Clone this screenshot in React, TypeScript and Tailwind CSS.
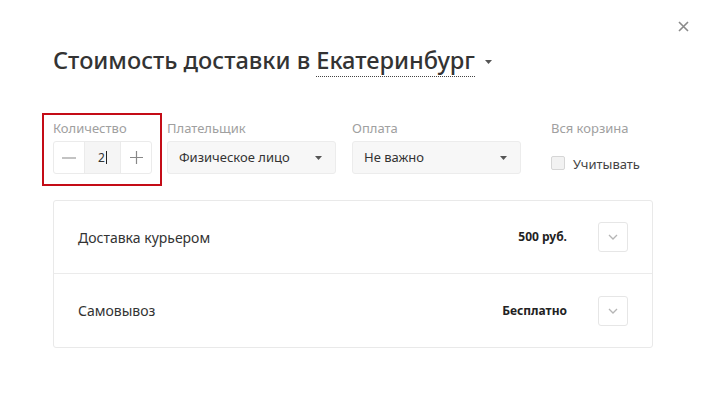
import React from "react";

const font = { fontFamily: '"Noto Sans", "Open Sans", sans-serif' };

function Caret() {
  return (
    <svg width="7" height="4" viewBox="0 0 7 4" className="block">
      <path d="M0 0h7L3.5 4z" fill="#555" />
    </svg>
  );
}

function Chevron() {
  return (
    <svg width="10" height="6" viewBox="0 0 10 6" fill="none">
      <path d="M1 1l4 4 4-4" stroke="#b5b5b5" strokeWidth="1.3" />
    </svg>
  );
}

function Select({ value }: { value: string }) {
  return (
    <div className="flex h-[33px] w-[169px] items-center justify-between rounded-[3px] border border-[#ececec] bg-[#f7f7f7] pl-[11px] pr-[13px] text-[13px] text-[#333]">
      <span>{value}</span>
      <Caret />
    </div>
  );
}

function Row({ title, price, last }: { title: string; price: string; last?: boolean }) {
  return (
    <div
      className={`flex h-[73px] items-center pl-[24px] pr-[24px] ${last ? "" : "border-b border-[#ebebeb]"}`}
    >
      <span className="flex-1 text-[14px] text-[#333]">{title}</span>
      <span className="mr-[31px] text-[12px] font-bold text-[#222]">{price}</span>
      <div className="flex h-[30px] w-[30px] items-center justify-center rounded-[3px] border border-[#e6e6e6] bg-white">
        <Chevron />
      </div>
    </div>
  );
}

export default function App() {
  return (
    <div className="relative h-[400px] w-[708px] overflow-hidden bg-white" style={font}>
      <button className="absolute right-[19px] top-[20px] flex h-[12px] w-[12px] items-center justify-center">
        <svg width="11" height="11" viewBox="0 0 11 11">
          <path d="M1 1l9 9M10 1l-9 9" stroke="#8a8a8a" strokeWidth="1.6" />
        </svg>
      </button>

      <div className="pl-[53px] pr-[56px] pt-[42px]">
        <div className="flex items-center">
          <h1 className="text-[23.6px] font-medium leading-[36px] text-[#333]">
            Стоимость доставки в{" "}
            <span className="border-b border-dotted border-[#444]">Екатеринбург</span>
          </h1>
          <span className="ml-[10px] mt-[4px]">
            <Caret />
          </span>
        </div>

        <div className="mt-[41px] flex">
          <div className="-ml-[11px] -mt-[6px] mr-[5px] flex h-[73px] w-[120px] flex-col border-2 border-[#c40c17] pl-[9px] pt-[4px]">
            <span className="text-[13px] leading-[18px] text-[#a0a0a0]">Количество</span>
            <div className="mt-[4px] flex h-[33px] w-[99px] overflow-hidden rounded-[3px] border border-[#ebebeb] text-[#777]">
              <div className="flex w-[31px] items-center justify-center border-r border-[#ebebeb]">
                <svg width="14" height="2" viewBox="0 0 14 2">
                  <path d="M0 1h14" stroke="#888" strokeWidth="1.2" />
                </svg>
              </div>
              <div className="flex flex-1 items-center justify-center bg-[#f5f5f5] text-[12px] text-[#333]">
                2<span className="ml-[1px] inline-block h-[13px] w-[1px] bg-[#222]" />
              </div>
              <div className="flex w-[31px] items-center justify-center border-l border-[#ebebeb]">
                <svg width="13" height="13" viewBox="0 0 13 13">
                  <path d="M0 6.5h13M6.5 0v13" stroke="#888" strokeWidth="1.2" />
                </svg>
              </div>
            </div>
          </div>

          <div className="flex flex-col">
            <span className="text-[13px] leading-[18px] text-[#a0a0a0]">Плательщик</span>
            <div className="mt-[4px]">
              <Select value="Физическое лицо" />
            </div>
          </div>

          <div className="ml-[16px] flex flex-col">
            <span className="text-[13px] leading-[18px] text-[#a0a0a0]">Оплата</span>
            <div className="mt-[4px]">
              <Select value="Не важно" />
            </div>
          </div>

          <div className="ml-[30px] flex flex-col">
            <span className="text-[13px] leading-[18px] text-[#a0a0a0]">Вся корзина</span>
            <label className="mt-[15px] flex items-center">
              <span className="inline-block h-[14px] w-[14px] rounded-[2px] border border-[#d6d6d6] bg-[#f2f2f2]" />
              <span className="ml-[8px] mt-[3px] text-[13px] text-[#444]">Учитывать</span>
            </label>
          </div>
        </div>

        <div className="mt-[14px] w-[600px] rounded-[3px] border border-[#e9e9e9]">
          <Row title="Доставка курьером" price="500 руб." />
          <Row title="Самовывоз" price="Бесплатно" last />
        </div>
      </div>
    </div>
  );
}
